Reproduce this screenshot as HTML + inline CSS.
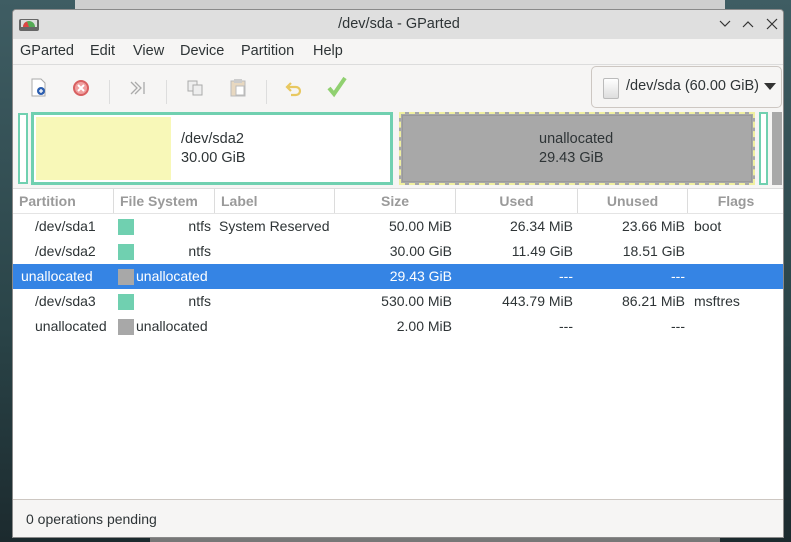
<!DOCTYPE html>
<html><head><meta charset="utf-8"><style>
*{box-sizing:border-box;margin:0;padding:0}
body{width:791px;height:542px;overflow:hidden;position:relative;font-family:"Liberation Sans",sans-serif;font-size:14px;color:#2e3436;background:linear-gradient(#3f5d63,#2a4448 60%,#1c2a2e)}
.a{position:absolute}
.win{left:12px;top:9px;width:772px;height:529px;background:#f6f5f4;border:1px solid #8a8a8a;border-radius:4px 4px 0 0;overflow:hidden}
.t{white-space:nowrap}
.m{position:absolute;top:33px;font-size:14.5px;white-space:nowrap}
.col{position:absolute;top:0;height:24px;line-height:24px;color:#9a9a9a;font-weight:bold;border-right:1px solid #dcdcdc}
.row{position:absolute;left:0;width:770px;height:25px;line-height:25px}
.sw{position:absolute;top:5px;width:16px;height:16px}
.r{position:absolute;text-align:right}
</style></head><body>
<div class="a" style="left:75px;top:0;width:650px;height:9px;background:#cfcfcf"></div>
<div class="a" style="left:150px;top:538px;width:570px;height:4px;background:#777"></div>
<div class="a win">
 <div class="a" style="left:0;top:0;width:772px;height:29px;background:#dfdfdf"></div>
 <svg class="a" style="left:5px;top:6px" width="22" height="18" viewBox="0 0 22 18"><rect x="1" y="3" width="20" height="12" rx="2" fill="#666"/><rect x="3" y="4" width="16" height="7" fill="#ddd"/><path d="M5 11a6 6 0 0 1 12 0z" fill="#5a5"/><path d="M5 11a6 6 0 0 1 4-5.5L11 11z" fill="#d44"/></svg>
 <div class="a t" style="left:0;width:772px;top:6px;text-align:center;font-size:14.5px">/dev/sda - GParted</div>
 <svg class="a" style="left:706px;top:10px" width="12" height="8"><path d="M1 1l5 5 5-5" stroke="#333" fill="none" stroke-width="1.2"/></svg>
 <svg class="a" style="left:729px;top:9px" width="12" height="10"><path d="M1 8l5-5 5 5" stroke="#333" fill="none" stroke-width="1.2"/></svg>
 <svg class="a" style="left:753px;top:8px" width="12" height="12"><path d="M1 1l10 10M11 1L1 11" stroke="#333" stroke-width="1.2"/></svg>
 <span class="m" style="left:7px">GParted</span>
 <span class="m" style="left:77px">Edit</span>
 <span class="m" style="left:120px">View</span>
 <span class="m" style="left:167px">Device</span>
 <span class="m" style="left:228px">Partition</span>
 <span class="m" style="left:300px">Help</span>
 <div class="a" style="left:0;top:54px;width:772px;height:1px;background:#dcdcdc"></div>
 <!-- toolbar -->
 <svg class="a" style="left:17px;top:68px" width="18" height="20"><path d="M2 1h9l4 4v13H2z" fill="#fff" stroke="#aaa"/><circle cx="11" cy="13" r="4" fill="#2d5fb0"/><path d="M9 13h4M11 11v4" stroke="#fff" stroke-width="1.3"/></svg>
 <svg class="a" style="left:59px;top:69px" width="18" height="18"><circle cx="9" cy="9" r="7" fill="#f0a0a0" stroke="#d86060" stroke-width="2"/><path d="M6 6l6 6M12 6l-6 6" stroke="#fff" stroke-width="2"/></svg>
 <div class="a" style="left:96px;top:70px;width:1px;height:24px;background:#ddd"></div>
 <svg class="a" style="left:116px;top:69px" width="18" height="18"><path d="M2 3l6 6-6 6M6 3l6 6-6 6M15 3v12" stroke="#aaa" fill="none" stroke-width="1.3"/></svg>
 <div class="a" style="left:153px;top:70px;width:1px;height:24px;background:#ddd"></div>
 <svg class="a" style="left:173px;top:69px" width="18" height="18"><rect x="2" y="2" width="9" height="10" fill="#eee" stroke="#aaa"/><rect x="7" y="6" width="9" height="10" fill="#eee" stroke="#aaa"/></svg>
 <svg class="a" style="left:216px;top:68px" width="18" height="20"><rect x="2" y="3" width="14" height="15" fill="#e8d8c0" stroke="#bbb"/><rect x="5" y="1" width="8" height="4" fill="#ccc"/><rect x="7" y="8" width="8" height="9" fill="#fff" stroke="#bbb"/></svg>
 <div class="a" style="left:253px;top:70px;width:1px;height:24px;background:#ddd"></div>
 <svg class="a" style="left:272px;top:71px" width="18" height="16"><path d="M6 2L2 6l4 4M2 6h9a4 4 0 0 1 0 8H6" stroke="#e8c860" stroke-width="2.2" fill="none"/></svg>
 <svg class="a" style="left:314px;top:66px" width="20" height="22"><path d="M2 12l5 6L18 2" stroke="#90d070" stroke-width="4" fill="none"/></svg>
 <div class="a" style="left:578px;top:56px;width:191px;height:42px;border:1px solid #cdc7c2;border-radius:5px;background:#f6f5f4"></div>
 <div class="a" style="left:590px;top:68px;width:16px;height:21px;background:linear-gradient(#fff,#ddd);border:1px solid #bbb;border-radius:2px"></div>
 <div class="a t" style="left:613px;top:68px;font-size:14.5px">/dev/sda (60.00 GiB)</div>
 <svg class="a" style="left:751px;top:73px" width="12" height="8"><path d="M0 0h12L6 7z" fill="#333"/></svg>
 <!-- graph -->
 <div class="a" style="left:5px;top:103px;width:10px;height:71px;border:2px solid #70d0b0;background:#fff"></div>
 <div class="a" style="left:18px;top:102px;width:362px;height:73px;border:3px solid #70d0b0;background:#fff"><div style="position:absolute;left:2px;top:2px;width:135px;height:63px;background:#f8f8b8"></div></div>
 <div class="a t" style="left:168px;top:120px;line-height:19px;font-size:14.5px">/dev/sda2<br>30.00 GiB</div>
 <div class="a" style="left:386px;top:102px;width:356px;height:73px;background:#a8a8a8;border:2px dashed #f0f0a0;outline:1px solid #999;outline-offset:-4px"></div>
 <div class="a t" style="left:526px;top:120px;line-height:19px;font-size:14.5px">unallocated<br>29.43 GiB</div>
 <div class="a" style="left:746px;top:102px;width:9px;height:73px;border:2px solid #70d0b0;background:#fff"></div>
 <div class="a" style="left:759px;top:102px;width:10px;height:73px;background:#a8a8a8"></div>
 <!-- table -->
 <div class="a" style="left:0;top:178px;width:772px;height:312px;background:#fff;border-top:1px solid #ddd">
  <div class="col" style="left:0;width:101px;padding-left:6px">Partition</div>
  <div class="col" style="left:101px;width:101px;padding-left:6px">File System</div>
  <div class="col" style="left:202px;width:120px;padding-left:6px">Label</div>
  <div class="col" style="left:322px;width:121px;text-align:center">Size</div>
  <div class="col" style="left:443px;width:122px;text-align:center">Used</div>
  <div class="col" style="left:565px;width:110px;text-align:center">Unused</div>
  <div class="col" style="left:675px;width:96px;text-align:center;border:0">Flags</div>
  <div class="a" style="left:0;top:24px;width:772px;height:1px;background:#e4e4e4"></div>

  <div class="row" style="top:25px"><span class="a" style="left:22px">/dev/sda1</span><div class="sw" style="left:105px;background:#70d0b0"></div><span class="r" style="right:572px">ntfs</span><span class="a" style="left:206px">System Reserved</span><span class="r" style="right:331px">50.00 MiB</span><span class="r" style="right:210px">26.34 MiB</span><span class="r" style="right:98px">23.66 MiB</span><span class="a" style="left:681px">boot</span></div>
  <div class="row" style="top:50px"><span class="a" style="left:22px">/dev/sda2</span><div class="sw" style="left:105px;background:#70d0b0"></div><span class="r" style="right:572px">ntfs</span><span class="r" style="right:331px">30.00 GiB</span><span class="r" style="right:210px">11.49 GiB</span><span class="r" style="right:98px">18.51 GiB</span></div>
  <div class="row" style="top:75px;background:#3584e4;color:#fff"><span class="a" style="left:8px">unallocated</span><div class="sw" style="left:105px;background:#a8a8a8"></div><span class="a" style="left:123px">unallocated</span><span class="r" style="right:331px">29.43 GiB</span><span class="r" style="right:210px">---</span><span class="r" style="right:98px">---</span></div>
  <div class="row" style="top:100px"><span class="a" style="left:22px">/dev/sda3</span><div class="sw" style="left:105px;background:#70d0b0"></div><span class="r" style="right:572px">ntfs</span><span class="r" style="right:331px">530.00 MiB</span><span class="r" style="right:210px">443.79 MiB</span><span class="r" style="right:98px">86.21 MiB</span><span class="a" style="left:681px">msftres</span></div>
  <div class="row" style="top:125px"><span class="a" style="left:22px">unallocated</span><div class="sw" style="left:105px;background:#a8a8a8"></div><span class="a" style="left:123px">unallocated</span><span class="r" style="right:331px">2.00 MiB</span><span class="r" style="right:210px">---</span><span class="r" style="right:98px">---</span></div>
 </div>
 <div class="a" style="left:0;top:489px;width:772px;height:1px;background:#cdc7c2"></div>
 <div class="a t" style="left:13px;top:501px;font-size:14px">0 operations pending</div>
</div>
</body></html>
